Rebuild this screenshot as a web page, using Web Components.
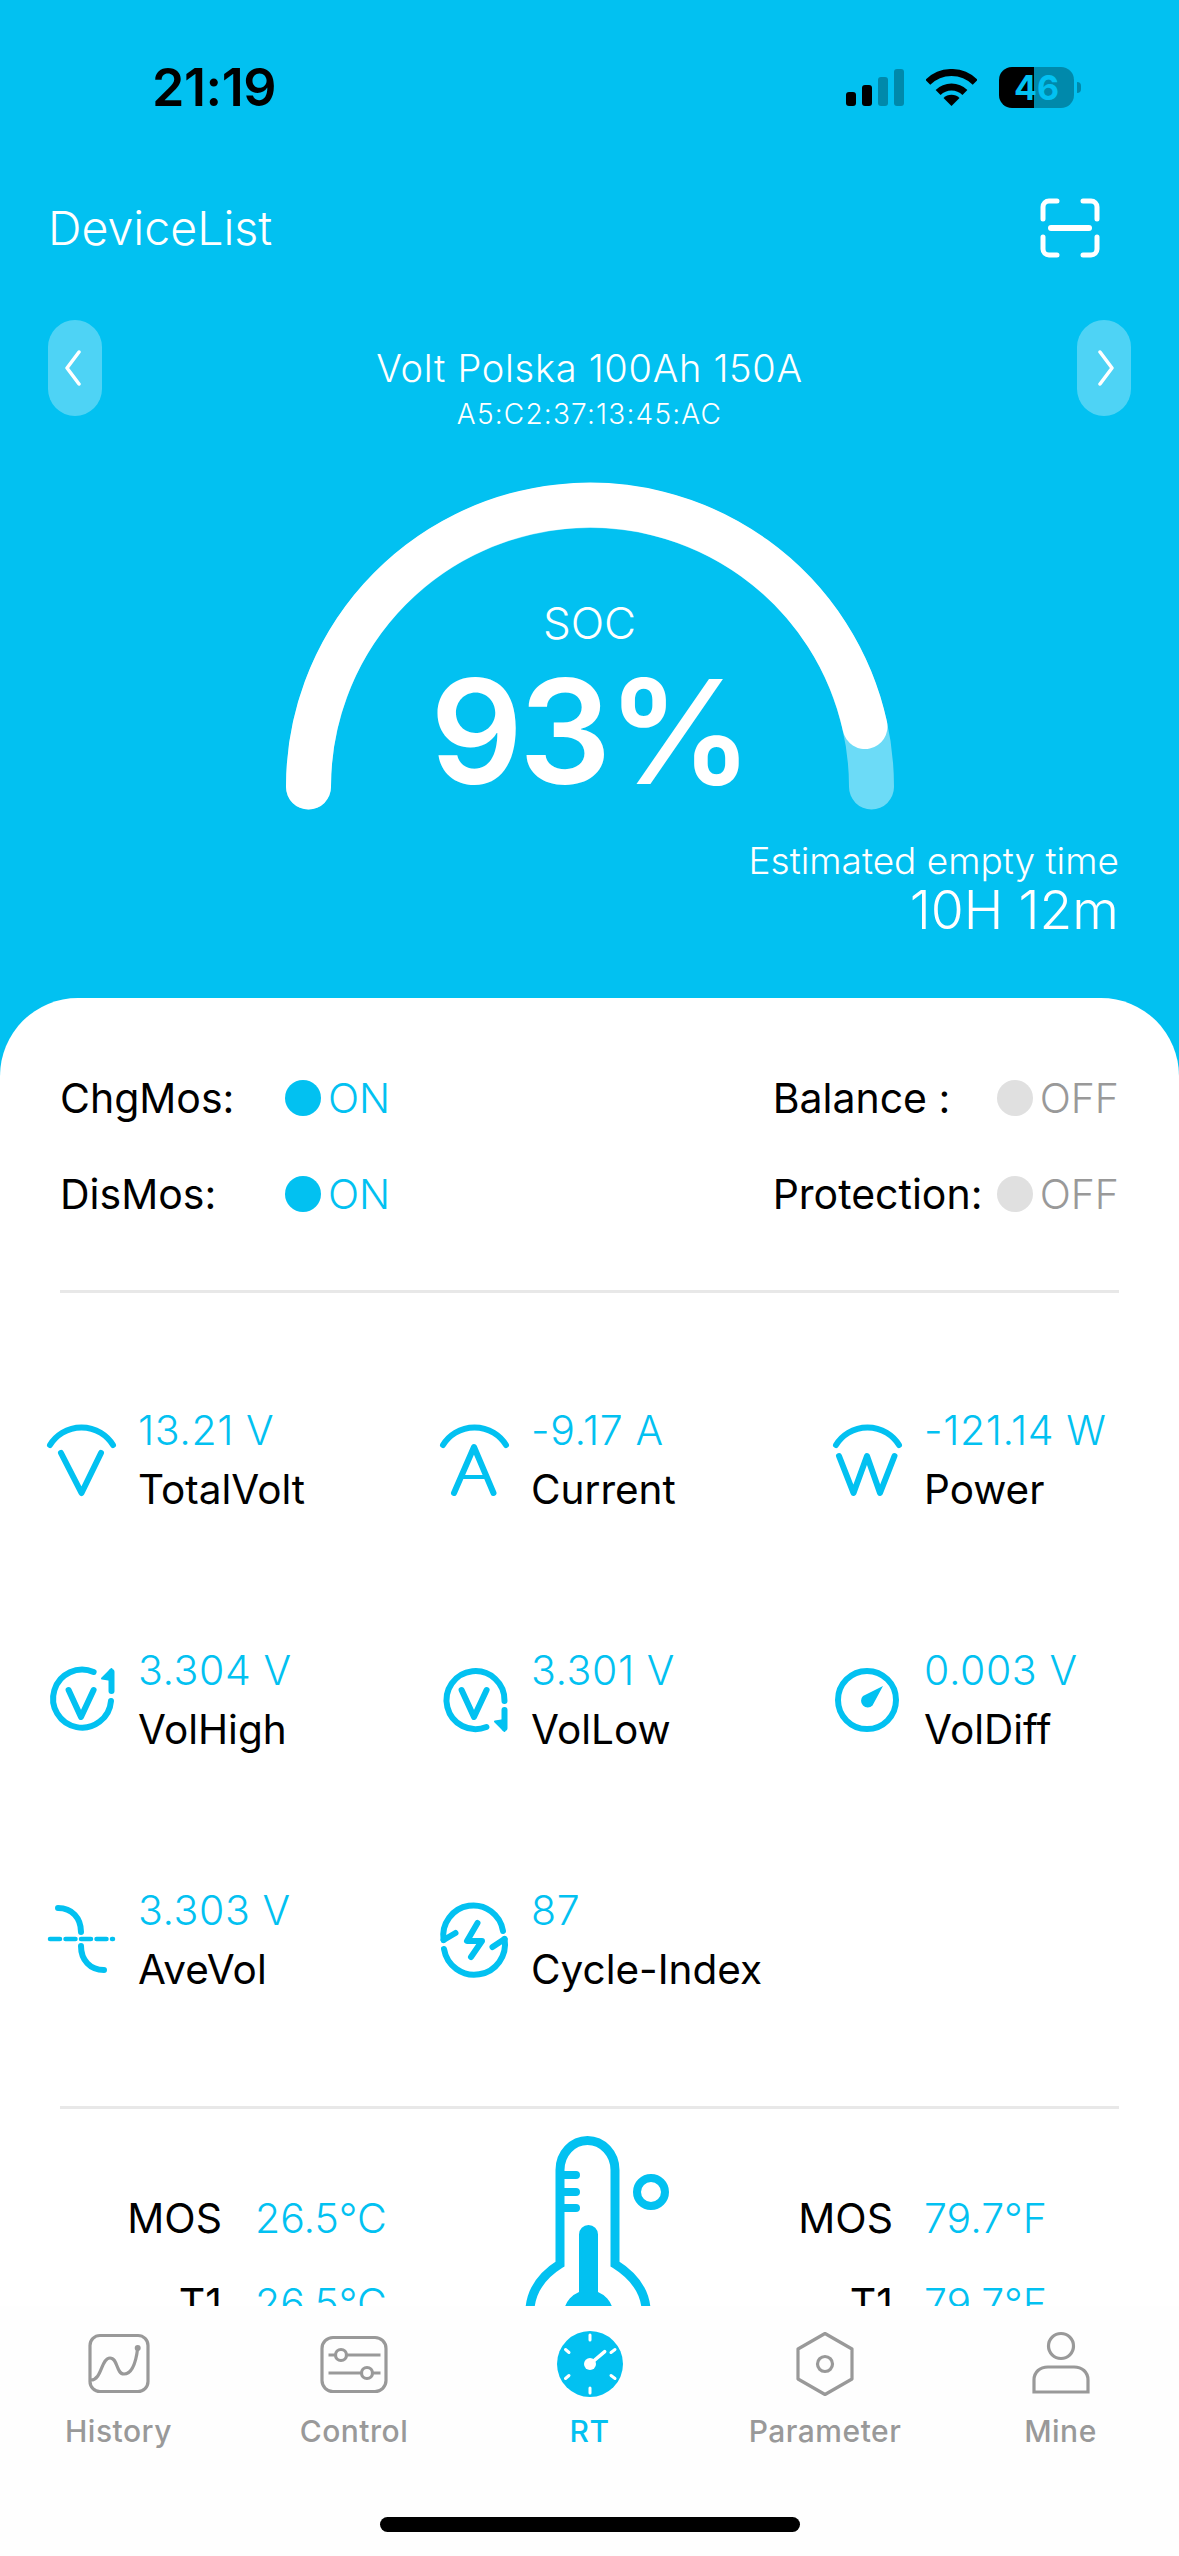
<!DOCTYPE html>
<html lang="en">
<head>
<meta charset="utf-8">
<title>RT</title>
<style>
  html, body { margin: 0; padding: 0; background: #02c1f1; }
  body { width: 1179px; height: 2556px; overflow: hidden; font-family: Inter, "Liberation Sans", sans-serif; }
</style>
</head>
<body>
<bms-screen>
  <bms-status slot="hero"></bms-status>
  <bms-header slot="hero">DeviceList</bms-header>
  <bms-device slot="hero">
    <span slot="name">Volt Polska 100Ah 150A</span>
    <span slot="mac">A5:C2:37:13:45:AC</span>
  </bms-device>
  <bms-gauge slot="hero" label="SOC" value="93%"></bms-gauge>
  <bms-estimate slot="hero">
    <span slot="label">Estimated empty time</span>
    <span slot="value">10H 12m</span>
  </bms-estimate>

  <bms-flags>
    <bms-flag width="225" on>ChgMos:</bms-flag>
    <bms-flag width="224">Balance :</bms-flag>
    <bms-flag width="225" on>DisMos:</bms-flag>
    <bms-flag width="224">Protection:</bms-flag>
  </bms-flags>

  <bms-metrics>
    <bms-metric icon="volt"><span slot="value">13.21 V</span>TotalVolt</bms-metric>
    <bms-metric icon="amp"><span slot="value">-9.17 A</span>Current</bms-metric>
    <bms-metric icon="watt"><span slot="value">-121.14 W</span>Power</bms-metric>
    <bms-metric icon="high"><span slot="value">3.304 V</span>VolHigh</bms-metric>
    <bms-metric icon="low"><span slot="value">3.301 V</span>VolLow</bms-metric>
    <bms-metric icon="diff"><span slot="value">0.003 V</span>VolDiff</bms-metric>
    <bms-metric icon="ave"><span slot="value">3.303 V</span>AveVol</bms-metric>
    <bms-metric icon="cycle"><span slot="value">87</span>Cycle-Index</bms-metric>
  </bms-metrics>

  <bms-temps>
    <bms-temp slot="left" name="MOS" value="26.5°C"></bms-temp>
    <bms-temp slot="left" name="T1" value="26.5°C"></bms-temp>
    <bms-temp slot="right" name="MOS" value="79.7°F"></bms-temp>
    <bms-temp slot="right" name="T1" value="79.7°F"></bms-temp>
  </bms-temps>

  <bms-tab slot="tabs" icon="history">History</bms-tab>
  <bms-tab slot="tabs" icon="control">Control</bms-tab>
  <bms-tab slot="tabs" icon="rt" active>RT</bms-tab>
  <bms-tab slot="tabs" icon="parameter">Parameter</bms-tab>
  <bms-tab slot="tabs" icon="mine">Mine</bms-tab>
</bms-screen>

<script>
  const BLUE = '#02c1f1';

  // page frame: blue top, white sheet, tab bar
  class BmsScreen extends HTMLElement {
    constructor() {
      super();
      this.attachShadow({mode: 'open'}).innerHTML = `
        <style>
          :host {display: flex; flex-direction: column; width: 1179px; height: 2556px; background: ${BLUE};}
          .hero {height: 998px; flex: none; color: #fff;}
          .sheet {height: 1308px; flex: none; overflow: hidden; background: #fff; border-radius: 78px 78px 0 0;}
          .tabs {height: 250px; flex: none; background: #fefefe; position: relative;
            display: grid; grid-template-columns: repeat(5, 235.5px); justify-content: center; align-content: start;}
          .home {position: absolute; left: 380px; top: 211px; width: 420px; height: 15px; border-radius: 8px; background: #000;}
        </style>
        <div class="hero"><slot name="hero"></slot></div>
        <div class="sheet"><slot></slot></div>
        <div class="tabs"><slot name="tabs"></slot><div class="home"></div></div>
      `;
    }
  }

  class BmsStatus extends HTMLElement {
    constructor() {
      super();
      this.attachShadow({mode: 'open'}).innerHTML = `
        <style>
          :host {display: flex; align-items: flex-start; height: 188px; color: #000; position: relative;}
          .time {margin: 58px 0 0 152px; font: 600 52px/60px Inter, "Liberation Sans", sans-serif; letter-spacing: -0.4px;}
          .icons {margin: 67px 0 0 auto; padding-right: 98px; display: flex; align-items: flex-start;}
          svg {display: block;}
          .batt {position: relative; width: 75px; height: 41px; margin-left: 22px; border-radius: 13px; overflow: hidden;
            background: linear-gradient(90deg, #000 0 35px, #0089ab 35px);
            display: flex; align-items: center; justify-content: center;
            font: 700 34px/41px Inter, "Liberation Sans", sans-serif; color: ${BLUE};}
          .nub {width: 4px; height: 11px; margin: 15px 0 0 3px; border-radius: 0 6px 6px 0; background: #0089ab;}
        </style>
        <div class="time">21:19</div>
        <div class="icons">
          <svg width="58" height="39" viewBox="0 0 58 39" style="margin-top:2px">
            <rect x="0" y="23" width="10" height="14" rx="3"/>
            <rect x="16" y="16" width="10" height="21" rx="3"/>
            <rect x="32" y="8" width="10" height="29" rx="3" fill="#0089ab"/>
            <rect x="48" y="0" width="10" height="37" rx="3" fill="#0089ab"/>
          </svg>
          <svg width="51" height="38" viewBox="0 0 51 38" style="margin:2px 0 0 22px">
            <path d="M1.8 13.3A33.5 33.5 0 0 1 49.2 13.3M12.1 23.6A19 19 0 0 1 38.9 23.6" fill="none" stroke="#000" stroke-width="7"/>
            <path d="M25.5 37L17.5 29A11.3 11.3 0 0 1 33.5 29Z"/>
          </svg>
          <div class="batt"><span>46</span></div>
          <div class="nub"></div>
        </div>
      `;
    }
  }

  class BmsHeader extends HTMLElement {
    constructor() {
      super();
      this.attachShadow({mode: 'open'}).innerHTML = `
        <style>
          :host {display: flex; align-items: center; justify-content: space-between; height: 80px;
            padding: 0 79px 0 48px; font: 300 46.5px/80px Inter, "Liberation Sans", sans-serif; color: #fff;}
          svg {display: block;}
        </style>
        <span><slot></slot></span>
        <svg width="60" height="60" viewBox="0 0 60 60" fill="none" stroke="#fff" stroke-width="5" stroke-linecap="round">
          <path d="M3 21V9a6 6 0 0 1 6-6h8M43 3h8a6 6 0 0 1 6 6v12M3 39v12a6 6 0 0 0 6 6h8M43 57h8a6 6 0 0 0 6-6V39"/>
          <path d="M11 30H49" stroke-width="6"/>
        </svg>
      `;
    }
  }

  class BmsDevice extends HTMLElement {
    constructor() {
      super();
      this.attachShadow({mode: 'open'}).innerHTML = `
        <style>
          :host {display: flex; align-items: flex-start; justify-content: space-between; height: 96px; margin-top: 52px; padding: 0 48px;}
          .btn {width: 54px; height: 96px; border-radius: 27px; background: rgba(255,255,255,.3); display: flex; align-items: center; justify-content: center;}
          svg {display: block;}
          .mid {text-align: center; padding-top: 26px;}
          .name {font: 300 38px/44px Inter, "Liberation Sans", sans-serif; letter-spacing: .7px;}
          .mac {font: 300 28px/32px Inter, "Liberation Sans", sans-serif; letter-spacing: 1.2px; margin-top: 8px;}
        </style>
        <div class="btn"><svg width="20" height="36" viewBox="0 0 20 36" fill="none" stroke="#fff" stroke-width="3.5" stroke-linecap="round" stroke-linejoin="round"><path d="M14 2L2 18L14 34"/></svg></div>
        <div class="mid">
          <div class="name"><slot name="name"></slot></div>
          <div class="mac"><slot name="mac"></slot></div>
        </div>
        <div class="btn"><svg width="20" height="36" viewBox="0 0 20 36" fill="none" stroke="#fff" stroke-width="3.5" stroke-linecap="round" stroke-linejoin="round"><path d="M6 2L18 18L6 34"/></svg></div>
      `;
    }
  }

  class BmsGauge extends HTMLElement {
    constructor() {
      super();
      this.attachShadow({mode: 'open'}).innerHTML = `
        <style>
          :host {display: grid; justify-items: center; margin-top: 62px; height: 340px;}
          svg, .txt {grid-area: 1 / 1;}
          svg {display: block;}
          .txt {text-align: center; padding-top: 120px;}
          .soc {font: 300 44px/50px Inter, "Liberation Sans", sans-serif;}
          .val {font: 600 145px/110px Inter, "Liberation Sans", sans-serif; margin-top: 29px; letter-spacing: -4px;}
        </style>
        <svg width="620" height="340" viewBox="0 0 620 340" fill="none" stroke-width="45" stroke-linecap="round">
          <path d="M28.5 309A281.5 281.5 0 0 1 591.5 309" stroke="#fff" stroke-opacity=".42"/>
          <path d="M28.5 309A281.5 281.5 0 0 1 585 248.5" stroke="#fff"/>
        </svg>
        <div class="txt">
          <div class="soc">${this.getAttribute('label')}</div>
          <div class="val">${this.getAttribute('value')}</div>
        </div>
      `;
    }
  }

  class BmsEstimate extends HTMLElement {
    constructor() {
      super();
      this.attachShadow({mode: 'open'}).innerHTML = `
        <style>
          :host {display: block; margin-top: 23px; padding-right: 60px; text-align: right;}
          .l {font: 300 37px/40px Inter, "Liberation Sans", sans-serif;}
          .v {font: 300 53.5px/56px Inter, "Liberation Sans", sans-serif; margin-top: 1px;}
        </style>
        <div class="l"><slot name="label"></slot></div>
        <div class="v"><slot name="value"></slot></div>
      `;
    }
  }

  class BmsFlags extends HTMLElement {
    constructor() {
      super();
      this.attachShadow({mode: 'open'}).innerHTML = `
        <style>
          :host {display: grid; grid-template-columns: auto auto; justify-content: space-between;
            padding: 52px 60px 0; height: 240px; box-sizing: border-box; align-content: start;}
        </style>
        <slot></slot>
      `;
    }
  }

  class BmsFlag extends HTMLElement {
    constructor() {
      super();
      const on = this.hasAttribute('on');
      this.attachShadow({mode: 'open'}).innerHTML = `
        <style>
          :host {display: flex; align-items: center; height: 96px; font: 400 41px/96px Inter, "Liberation Sans", sans-serif; color: #000;}
          .label {width: ${this.getAttribute('width')}px; white-space: nowrap;}
          .dot {width: 36px; height: 36px; border-radius: 50%; background: ${on ? BLUE : '#e0e0e0'}; margin-right: 7px;}
          .state {color: ${on ? BLUE : '#999'}; font-weight: 300;}
        </style>
        <span class="label"><slot></slot></span>
        <span class="dot"></span>
        <span class="state">${on ? 'ON' : 'OFF'}</span>
      `;
    }
  }

  class BmsMetrics extends HTMLElement {
    constructor() {
      super();
      this.attachShadow({mode: 'open'}).innerHTML = `
        <style>
          :host {display: block; margin: 52px 60px 0; padding: 0 0 106px; border-top: 3px solid #e8e8e8; border-bottom: 3px solid #e8e8e8;}
          .grid {margin: 107px -60px 0; display: grid; grid-template-columns: repeat(3, 393px); grid-auto-rows: 240px; height: 600px;}
        </style>
        <div class="grid"><slot></slot></div>
      `;
    }
  }

  const METRIC_ICONS = {
    volt: `<path d="M8 25A37 37 0 0 1 71 25"/><path d="M19 33L39.5 73L59 33"/>`,
    amp: `<path d="M8 25A37 37 0 0 1 71 25"/><path d="M19 73L39 27L58.5 73"/><path d="M28 57H50" stroke-width="4"/>`,
    watt: `<path d="M8 25A37 37 0 0 1 71 25"/><path d="M11 36L25.5 73L39 36L52 73L66.5 36"/>`,
    high: `<path d="M51.6 12A29 29 0 1 0 69 41"/><path d="M26.6 30L39 57L51.6 30"/><path d="M69.5 12V31"/><path d="M69.5 9L60 18.5L69.5 20Z" fill="${BLUE}" stroke-width="2"/>`,
    low: `<path d="M69.5 41A29 29 0 1 0 51.4 67"/><path d="M26.6 30L39 57L51.6 30"/><path d="M69.5 50V68"/><path d="M69.5 71L60 61.5L69.5 60Z" fill="${BLUE}" stroke-width="2"/>`,
    diff: `<circle cx="39" cy="40" r="29"/><path d="M55 26L44.5 45.5A6.5 6.5 0 1 1 35 36Z" fill="${BLUE}" stroke="none"/>`,
    ave: `<path d="M16 8C30 8 39 18 39 32"/><path d="M39 46C39 60 48 70 62 70"/><path d="M8 39H71" stroke-width="4.5" stroke-dasharray="10 5.5"/>`,
    cycle: `<path d="M8.6 40A30 30 0 0 1 68 31"/><path d="M69.6 39A30 30 0 0 1 9 49"/><path d="M8.6 40L20.5 33"/><path d="M69.6 39L57.5 47"/><path d="M42.5 23L32 41H47L36 57" stroke-linejoin="round"/>`
  };

  class BmsMetric extends HTMLElement {
    constructor() {
      super();
      this.attachShadow({mode: 'open'}).innerHTML = `
        <style>
          :host {display: flex; align-items: flex-start; padding-left: 42px; font: 400 40.5px/60px Inter, "Liberation Sans", sans-serif; color: #000;}
          svg {display: block; margin: 20px 16px 0 0; flex: none;}
          .value {color: ${BLUE}; font-weight: 300; font-size: 41px; letter-spacing: .6px; white-space: nowrap;}
          .label {white-space: nowrap;}
        </style>
        <svg width="80" height="80" viewBox="0 0 80 80" fill="none" stroke="${BLUE}" stroke-width="6" stroke-linecap="round" stroke-linejoin="round">${METRIC_ICONS[this.getAttribute('icon')]}</svg>
        <div>
          <div class="value"><slot name="value"></slot></div>
          <div class="label"><slot></slot></div>
        </div>
      `;
    }
  }

  class BmsTemps extends HTMLElement {
    constructor() {
      super();
      this.attachShadow({mode: 'open'}).innerHTML = `
        <style>
          :host {display: grid; grid-template-columns: 524px 130px 1fr; margin-top: 27px;}
          .col {padding-top: 40px; display: grid; justify-content: start; align-content: start;}
          .l {--name-w: 222px; --gap: 33px;}
          .r {--name-w: 239px; --gap: 31px;}
          svg {display: block; overflow: visible;}
        </style>
        <div class="col l"><slot name="left"></slot></div>
        <svg width="130" height="200" viewBox="0 0 130 200" fill="none" stroke="${BLUE}" stroke-width="9" stroke-linecap="round">
          <path d="M6 172C8 152 20 138 36 128V34A27.5 29.5 0 0 1 91 34V128C107 138 120 152 122 172"/>
          <path d="M36 39H52M36 56H52M36 72H52" stroke-width="8"/>
          <circle cx="127" cy="56" r="14" stroke-width="8"/>
          <path d="M55 98.5A9.5 9.5 0 0 1 74 98.5V156A25 25 0 1 1 55 156Z" fill="${BLUE}" stroke="none"/>
        </svg>
        <div class="col r"><slot name="right"></slot></div>
      `;
    }
  }

  class BmsTemp extends HTMLElement {
    constructor() {
      super();
      this.attachShadow({mode: 'open'}).innerHTML = `
        <style>
          :host {display: flex; height: 85px; font: 400 41px/85px Inter, "Liberation Sans", sans-serif; color: #000;}
          .n {width: var(--name-w); text-align: right; margin-right: var(--gap);}
          .v {color: ${BLUE}; font-weight: 300;}
        </style>
        <span class="n">${this.getAttribute('name')}</span>
        <span class="v">${this.getAttribute('value')}</span>
      `;
    }
  }

  const TAB_ICONS = {
    history: `<rect x="11" y="5.5" width="58" height="56" rx="10"/><path d="M12 50C23 50 22 28 31 28C39 28 37 44 45 44C53 44 57 32 58.7 18"/><circle cx="58.7" cy="18" r="3" fill="#999" stroke="none"/>`,
    control: `<rect x="8" y="7.5" width="64" height="54" rx="11"/><path d="M14.5 25H66.5M14.5 43H66.5"/><circle cx="27" cy="25" r="5.5" fill="#fefefe"/><circle cx="53" cy="43" r="5.5" fill="#fefefe"/>`,
    rt: `<circle cx="40" cy="34" r="33" fill="${BLUE}" stroke="none"/><g stroke="#fff" stroke-width="3" stroke-linecap="round"><path d="M40 5V10M40 58V63M15.5 19.5L19 22.5M15.5 48.5L19 45.5M61 22.5L65 19.5M61 45.5L65 48.5"/><path d="M40 34L54.7 21.7" stroke-width="3.5"/></g><circle cx="40" cy="34" r="6" fill="#fff" stroke="none"/>`,
    parameter: `<path d="M40 3.5L67 19V49L40 64.5L13 49V19Z" stroke-linejoin="round"/><circle cx="40" cy="34" r="7.5"/>`,
    mine: `<circle cx="40" cy="16" r="12.5"/><path d="M13 62V50C13 42 19 37 27 37H53C61 37 67 42 67 50V62Z"/>`
  };

  class BmsTab extends HTMLElement {
    constructor() {
      super();
      const active = this.hasAttribute('active');
      this.attachShadow({mode: 'open'}).innerHTML = `
        <style>
          :host {display: flex; flex-direction: column; align-items: center; padding-top: 24px;
            font: 500 30px/36px Inter, "Liberation Sans", sans-serif; letter-spacing: .5px; color: ${active ? BLUE : '#999'};}
          svg {display: block; margin-bottom: 15px;}
        </style>
        <svg width="80" height="68" viewBox="0 0 80 68" fill="none" stroke="#999" stroke-width="3.2">${TAB_ICONS[this.getAttribute('icon')]}</svg>
        <span><slot></slot></span>
      `;
    }
  }

  customElements.define('bms-screen', BmsScreen);
  customElements.define('bms-status', BmsStatus);
  customElements.define('bms-header', BmsHeader);
  customElements.define('bms-device', BmsDevice);
  customElements.define('bms-gauge', BmsGauge);
  customElements.define('bms-estimate', BmsEstimate);
  customElements.define('bms-flags', BmsFlags);
  customElements.define('bms-flag', BmsFlag);
  customElements.define('bms-metrics', BmsMetrics);
  customElements.define('bms-metric', BmsMetric);
  customElements.define('bms-temps', BmsTemps);
  customElements.define('bms-temp', BmsTemp);
  customElements.define('bms-tab', BmsTab);
</script>
</body>
</html>
